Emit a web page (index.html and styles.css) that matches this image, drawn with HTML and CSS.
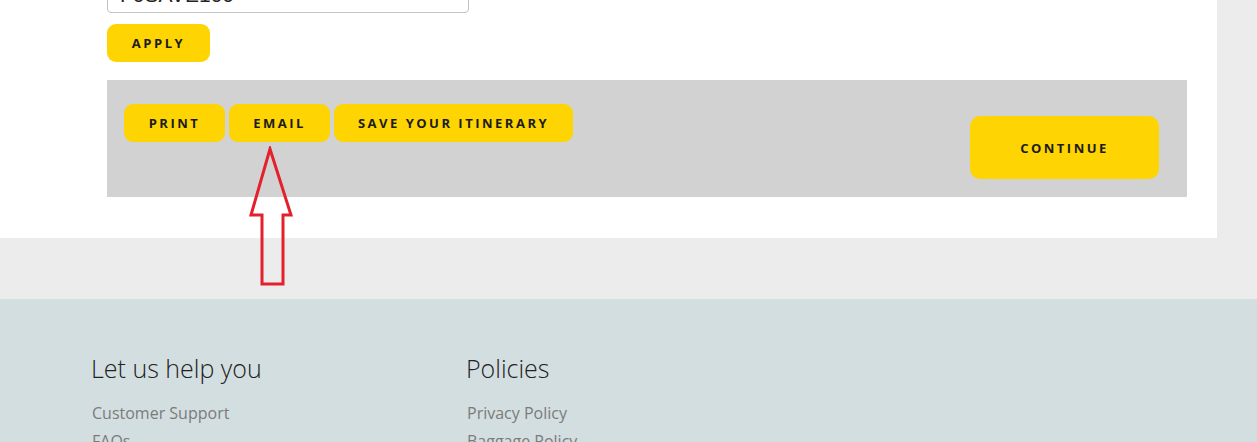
FILE: index.html
```html
<!DOCTYPE html>
<html>
<head>
<meta charset="utf-8">
<link rel="stylesheet" href="styles.css">
</head>
<body>
<div class="page">
  <div class="panel">
    <div class="coupon">
      <input class="coupon-input" type="text" value="F0SAVE100">
    </div>
    <button class="btn btn-apply">APPLY</button>
    <div class="bar">
      <div class="bar-left">
        <button class="btn btn-print">PRINT</button>
        <button class="btn btn-email">EMAIL</button>
        <button class="btn btn-save">SAVE YOUR ITINERARY</button>
      </div>
      <button class="btn btn-continue">CONTINUE</button>
    </div>
  </div>
  <div class="spacer"></div>
  <footer class="footer">
    <div class="col">
      <h3 class="col-title">Let us help you</h3>
      <ul class="links">
        <li>Customer Support</li>
        <li>FAQs</li>
      </ul>
    </div>
    <div class="col">
      <h3 class="col-title">Policies</h3>
      <ul class="links">
        <li>Privacy Policy</li>
        <li>Baggage Policy</li>
      </ul>
    </div>
  </footer>
  <svg class="arrow" width="46" height="142" viewBox="248 146 46 142">
    <polygon points="270,149 251,215 262,215 262,284 283,284 283,215 291,215" fill="none" stroke="#e3202b" stroke-width="3" stroke-linejoin="miter"/>
  </svg>
</div>
</body>
</html>
```
FILE: styles.css
```css
html, body {
  margin: 0;
  padding: 0;
}
body {
  background: #ececec;
  font-family: "Open Sans", "Liberation Sans", sans-serif;
  overflow: hidden;
}
.page {
  position: relative;
  width: 1257px;
  height: 442px;
  overflow: hidden;
}
.panel {
  width: 1217px;
  background: #ffffff;
  box-sizing: border-box;
  padding: 0 0 41px 107px;
}
.coupon {
  margin-top: -23px;
}
.coupon-input {
  display: block;
  box-sizing: border-box;
  width: 362px;
  height: 36px;
  border: 1px solid #c4c4c4;
  border-radius: 4px;
  padding: 0 12px;
  font-family: "Liberation Sans", Arial, sans-serif;
  font-size: 21px;
  color: #222;
  background: #fff;
}
.btn {
  display: flex;
  align-items: center;
  justify-content: center;
  box-sizing: border-box;
  border: none;
  background: #fed402;
  color: #1b1b1b;
  font-family: "Open Sans", sans-serif;
  font-weight: 700;
  font-size: 13px;
  letter-spacing: 2.5px;
  border-radius: 9px;
  padding: 0;
  margin: 0;
}
.btn-apply {
  margin-top: 11px;
  width: 103px;
  height: 38px;
}
.bar {
  margin-top: 18px;
  width: 1080px;
  height: 117px;
  background: #d2d2d2;
  box-sizing: border-box;
  padding: 24px 28px 0 17px;
  display: flex;
  justify-content: space-between;
  align-items: flex-start;
}
.bar-left {
  display: flex;
  gap: 4px;
}
.btn-print { width: 101px; height: 38px; }
.btn-email { width: 101px; height: 38px; }
.btn-save { width: 239px; height: 38px; }
.btn-continue {
  margin-top: 12px;
  width: 189px;
  height: 63px;
  border-radius: 10px;
}
.spacer {
  height: 61px;
}
.footer {
  background: #d3dee0;
  height: 144px;
  box-sizing: border-box;
  padding: 51px 0 0 91px;
  display: flex;
}
.col {
  width: 375px;
}
.col-title {
  margin: 0;
  font-family: "Open Sans", sans-serif;
  font-weight: 300;
  font-size: 25px;
  line-height: 36px;
  color: #222;
}
.links {
  list-style: none;
  margin: 13px 0 0 1px;
  padding: 0;
}
.links li {
  font-size: 16px;
  line-height: 28px;
  color: #7b7b7b;
}
.arrow {
  position: absolute;
  left: 248px;
  top: 146px;
}
```
